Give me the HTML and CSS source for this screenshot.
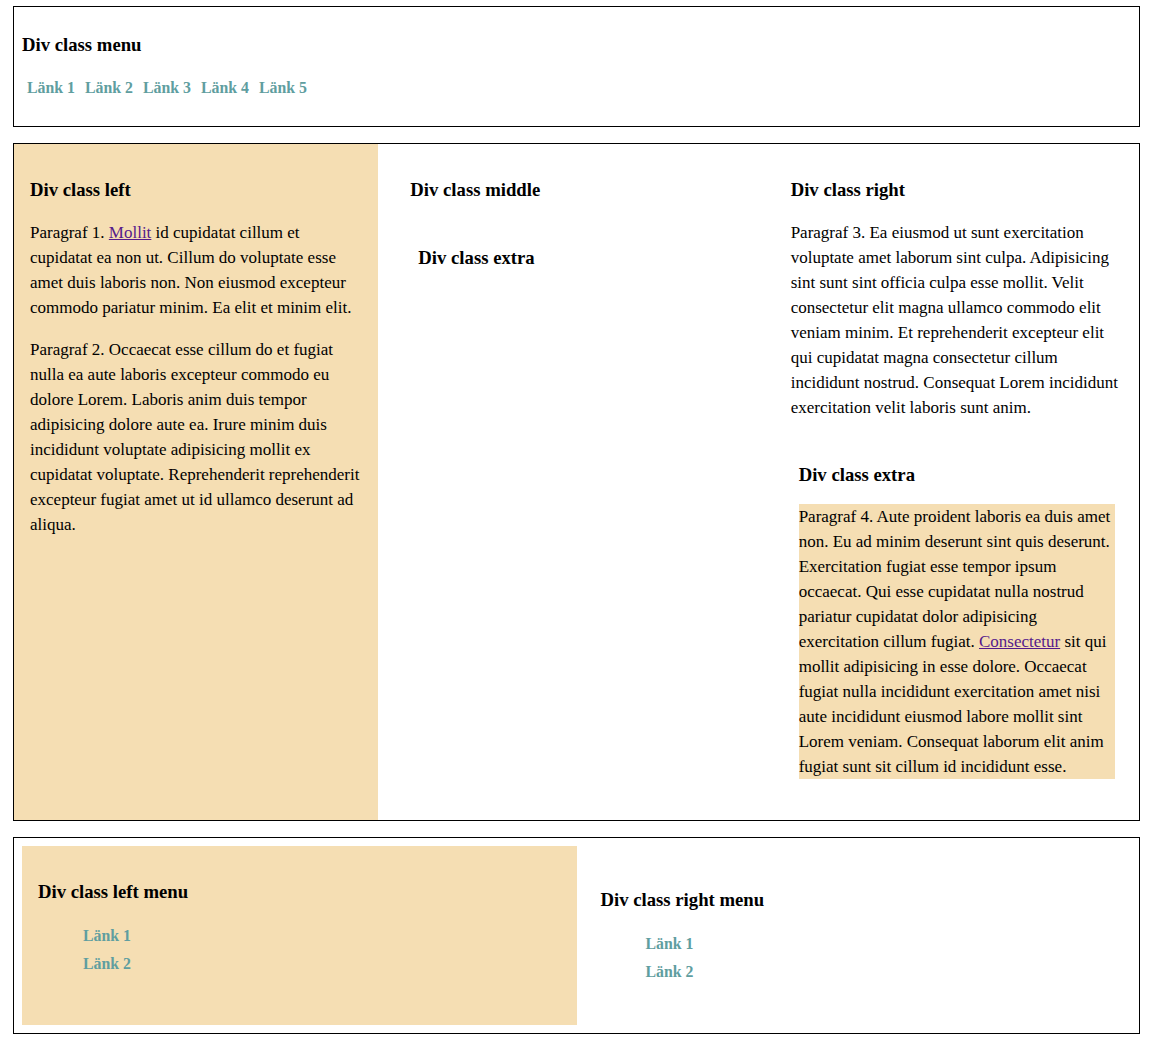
FILE: index.html
```html
<!DOCTYPE html>
<html lang="sv">
<head>
<meta charset="utf-8">
<title>Layout</title>
<link rel="stylesheet" href="styles.css">
</head>
<body>
<div class="page">
  <div class="box menu">
    <h3>Div class menu</h3>
    <nav class="topnav">
      <a href="#">Länk 1</a>
      <a href="#">Länk 2</a>
      <a href="#">Länk 3</a>
      <a href="#">Länk 4</a>
      <a href="#">Länk 5</a>
    </nav>
  </div>

  <div class="box main">
    <div class="col left">
      <h3>Div class left</h3>
      <p>Paragraf 1. <a class="textlink" href="#">Mollit</a> id cupidatat cillum et cupidatat ea non ut. Cillum do voluptate esse amet duis laboris non. Non eiusmod excepteur commodo pariatur minim. Ea elit et minim elit.</p>
      <p>Paragraf 2. Occaecat esse cillum do et fugiat nulla ea aute laboris excepteur commodo eu dolore Lorem. Laboris anim duis tempor adipisicing dolore aute ea. Irure minim duis incididunt voluptate adipisicing mollit ex cupidatat voluptate. Reprehenderit reprehenderit excepteur fugiat amet ut id ullamco deserunt ad aliqua.</p>
    </div>
    <div class="col middle">
      <h3>Div class middle</h3>
      <div class="extra">
        <h3>Div class extra</h3>
      </div>
    </div>
    <div class="col right">
      <h3>Div class right</h3>
      <p>Paragraf 3. Ea eiusmod ut sunt exercitation voluptate amet laborum sint culpa. Adipisicing sint sunt sint officia culpa esse mollit. Velit consectetur elit magna ullamco commodo elit veniam minim. Et reprehenderit excepteur elit qui cupidatat magna consectetur cillum incididunt nostrud. Consequat Lorem incididunt exercitation velit laboris sunt anim.</p>
      <div class="extra">
        <h3>Div class extra</h3>
        <p class="highlight">Paragraf 4. Aute proident laboris ea duis amet non. Eu ad minim deserunt sint quis deserunt. Exercitation fugiat esse tempor ipsum occaecat. Qui esse cupidatat nulla nostrud pariatur cupidatat dolor adipisicing exercitation cillum fugiat. <a class="textlink" href="#">Consectetur</a> sit qui mollit adipisicing in esse dolore. Occaecat fugiat nulla incididunt exercitation amet nisi aute incididunt eiusmod labore mollit sint Lorem veniam. Consequat laborum elit anim fugiat sunt sit cillum id incididunt esse.</p>
      </div>
    </div>
  </div>

  <div class="box bottom">
    <div class="leftmenu">
      <h3>Div class left menu</h3>
      <ul class="sidelinks">
        <li><a href="#">Länk 1</a></li>
        <li><a href="#">Länk 2</a></li>
      </ul>
    </div>
    <div class="rightmenu">
      <h3>Div class right menu</h3>
      <ul class="sidelinks">
        <li><a href="#">Länk 1</a></li>
        <li><a href="#">Länk 2</a></li>
      </ul>
    </div>
  </div>
</div>
</body>
</html>
```

FILE: styles.css
```css
body {
  margin: 6px 10px 0 13px;
  font-family: "Liberation Serif", "Times New Roman", serif;
  font-size: 16px;
  color: #000;
  background: #fff;
}

.page {
  display: flex;
  flex-direction: column;
  gap: 16px;
}

.box {
  border: 1px solid #000;
}

h3 {
  font-size: 18.72px;
  font-weight: bold;
  margin: 18.72px 0;
}

p {
  font-size: 17px;
  line-height: 25px;
  margin: 17px 0;
}

.menu {
  padding: 8px;
}

.topnav {
  display: flex;
  margin: 16px 0;
}

.topnav a,
.sidelinks a {
  display: block;
  padding: 5px;
  color: #5f9ea0;
  font-weight: bold;
  text-decoration: none;
}

.topnav a {
  font-size: 15.85px;
}

.sidelinks a {
  font-size: 15.8px;
}

.textlink {
  color: #551a8b;
}

.main {
  display: grid;
  grid-template-columns: 1fr 1fr 1fr;
  column-gap: 16px;
}

.col {
  padding: 16px;
}

.left {
  background: #f5deb3;
}

.extra {
  padding: 8px;
}

.highlight {
  background: #f5deb3;
}

.bottom {
  display: flex;
  padding: 8px;
}

.leftmenu {
  width: 50%;
  flex: none;
  padding: 16px;
  box-sizing: border-box;
  background: #f5deb3;
}

.rightmenu {
  flex: 1;
  margin: 8px;
  padding: 16px;
}

.sidelinks {
  list-style: none;
  margin: 16px 0 15px;
  padding-left: 40px;
}
```
